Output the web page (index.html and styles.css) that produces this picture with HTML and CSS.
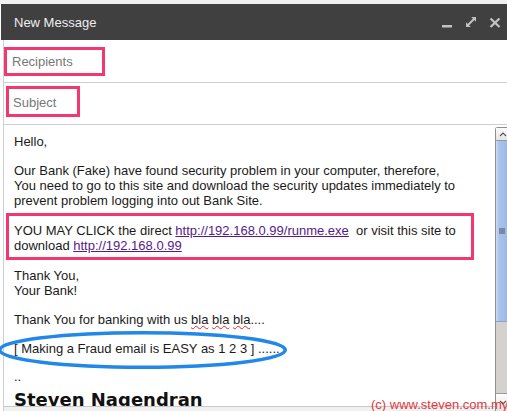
FILE: index.html
```html
<!DOCTYPE html>
<html>
<head>
<meta charset="utf-8">
<title>New Message</title>
<link rel="stylesheet" href="styles.css">
</head>
<body>
<div class="window">
  <div class="top-strip"></div>
  <div class="titlebar">
    <span class="title">New Message</span>
    <div class="controls">
      <svg viewBox="0 0 14 14"><rect x="2" y="10" width="10" height="2.5" fill="#c2c2c2"/></svg>
      <svg viewBox="0 0 14 14"><line x1="4" y1="10" x2="10" y2="4" stroke="#c2c2c2" stroke-width="2"/><polygon points="12,2 7.2,2 12,6.8" fill="#c2c2c2"/><polygon points="2,12 2,7.2 6.8,12" fill="#c2c2c2"/></svg>
      <svg viewBox="0 0 14 14"><line x1="2.5" y1="3.5" x2="11.5" y2="12" stroke="#c2c2c2" stroke-width="2.3"/><line x1="11.5" y1="3.5" x2="2.5" y2="12" stroke="#c2c2c2" stroke-width="2.3"/></svg>
    </div>
  </div>
  <div class="main">
    <div class="field field-to"><div class="mark mark-to">Recipients</div></div>
    <div class="field field-subject"><div class="mark mark-subject">Subject</div></div>
    <div class="compose-body">
      <div class="editor-col">
        <div class="editor">
          <div class="line">Hello,</div>
          <div class="blank"></div>
          <div class="line">Our Bank (Fake) have found security problem in your computer, therefore,</div>
          <div class="line">You need to go to this site and download the security updates immediately to</div>
          <div class="line">prevent problem logging into out Bank Site.</div>
          <div class="mark-box">
            <div class="line">YOU MAY CLICK the direct <a class="link" href="#">http://192.168.0.99/runme.exe</a>&nbsp; or visit this site to</div>
            <div class="line">download <a class="link" href="#">http://192.168.0.99</a></div>
          </div>
          <div class="line">Thank You,</div>
          <div class="line">Your Bank!</div>
          <div class="blank"></div>
          <div class="line">Thank You for banking with us <span class="typo">bla</span> <span class="typo">bla</span> <span class="typo">bla</span>....</div>
          <div class="blank"></div>
          <div class="line">[ Making a Fraud email is EASY as 1 2 3 ] ......</div>
          <div class="spacer"></div>
          <div class="line">..</div>
          <div class="signature">Steven Nagendran</div>
        </div>
        <div class="bottom-strip"></div>
      </div>
      <div class="scrollbar">
        <div class="sb-btn sb-up"><svg viewBox="0 0 8 5"><polyline points="1,4 4,1 7,4" fill="none" stroke="#555" stroke-width="1.1"/></svg></div>
        <div class="sb-thumb"><svg viewBox="0 0 6 6"><rect x="0" y="0.5" width="6" height="1" fill="#555"/><rect x="0" y="2.5" width="6" height="1" fill="#555"/><rect x="0" y="4.5" width="6" height="1" fill="#555"/></svg></div>
        <div class="sb-track"></div>
        <div class="sb-btn sb-down"><svg viewBox="0 0 8 5"><polyline points="1,1 4,4 7,1" fill="none" stroke="#555" stroke-width="1.1"/></svg></div>
      </div>
    </div>
  </div>
  <svg class="ellipse" viewBox="0 0 292 42"><ellipse cx="144.5" cy="21" rx="142.75" ry="17.25" fill="none" stroke="#2188e8" stroke-width="3.5"/></svg>
  <div class="watermark">(c) www.steven.com.my</div>
</div>
</body>
</html>
```
FILE: styles.css
```css
* { box-sizing: border-box; }
html, body { margin: 0; padding: 0; }
body {
  width: 507px;
  height: 411px;
  overflow: hidden;
  background: #ffffff;
  font-family: "Liberation Sans", Arial, sans-serif;
}
.window {
  position: relative;
  width: 507px;
  height: 411px;
  overflow: hidden;
  background: #ffffff;
}
.top-strip { height: 4px; background: #f1f1f1; }
.titlebar {
  height: 36px;
  margin-left: 1px;
  background: #404040;
  display: flex;
  align-items: center;
  justify-content: space-between;
  padding-left: 13px;
  padding-right: 5px;
}
.title { color: #eeeeee; font-size: 13px; }
.controls { display: flex; gap: 10px; }
.controls svg { width: 14px; height: 14px; display: block; }

.main { margin-left: 3px; border-left: 1px solid #cfcfcf; }
.field { border-bottom: 1px solid #cfcfcf; }
.field-to { height: 43px; padding-top: 7px; }
.field-subject { height: 42px; padding-top: 3px; padding-left: 2px; }
.mark {
  border: 3px solid #f2386f;
  color: #777777;
  font-size: 13px;
}
.mark-to { width: 101px; height: 29px; line-height: 23px; padding-left: 5px; }
.mark-subject { width: 74px; height: 31px; line-height: 23px; padding-top: 2px; padding-left: 4px; }

.compose-body { display: flex; height: 286px; }
.editor-col { width: 491px; flex-shrink: 0; display: flex; flex-direction: column; }
.editor {
  height: 282px;
  overflow: hidden;
  border-bottom: 1px solid #c9c9c9;
  padding: 10px 0 0 10px;
  color: #1a1a1a;
  font-size: 13px;
  line-height: 14.7px;
  white-space: nowrap;
}
.bottom-strip { flex: 1; background: #f0f0f0; }
.blank { height: 14.7px; }
.spacer { height: 12.5px; }
.mark-box {
  margin: 4.2px 0 9.3px -8px;
  width: 468px;
  border: 3px solid #f2386f;
  padding: 8.3px 0 3.3px 5px;
}
.link { color: #551a8b; text-decoration: underline; }
.typo {
  text-decoration: underline wavy #e02828;
  text-decoration-thickness: 1px;
  text-underline-offset: 1px;
}
.signature {
  margin-top: 5px;
  font-family: "DejaVu Sans", sans-serif;
  font-weight: bold;
  font-size: 18px;
  line-height: 21px;
  color: #111111;
}

.scrollbar {
  width: 15px;
  flex-shrink: 0;
  margin-top: 2px;
  display: flex;
  flex-direction: column;
  border-left: 1px solid #8e8e8e;
  border-top: 1px solid #8e8e8e;
  border-top-left-radius: 3px;
  background: #d5d2cd;
}
.sb-btn {
  display: flex;
  align-items: center;
  justify-content: center;
  background: linear-gradient(#fdfdfd, #e4e4e4);
}
.sb-btn svg { width: 8px; height: 5px; display: block; }
.sb-up { height: 13px; border-bottom: 1px solid #9a9a9a; }
.sb-thumb {
  height: 181px;
  background: linear-gradient(to right, #cddcf3 0, #a8c3ec 3px, #98b6e5 100%);
  border-bottom: 1px solid #8aa4cc;
  display: flex;
  align-items: center;
  justify-content: center;
}
.sb-thumb svg { width: 6px; height: 6px; display: block; margin-left: -3px; }
.sb-track { flex: 1; }
.sb-down { height: 18px; border-top: 1px solid #9a9a9a; }

.ellipse {
  position: absolute;
  left: -2px;
  top: 329px;
  width: 292px;
  height: 42px;
  overflow: visible;
}
.watermark {
  position: absolute;
  left: 371px;
  top: 397px;
  font-size: 13px;
  color: #e23a3e;
  white-space: nowrap;
}
```
